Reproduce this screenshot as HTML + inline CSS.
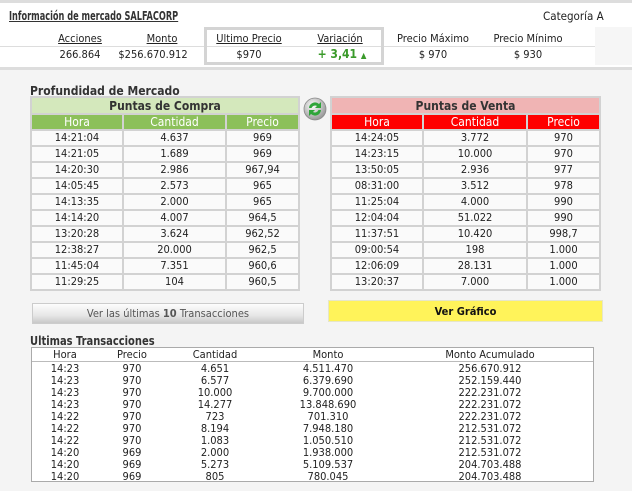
<!DOCTYPE html>
<html><head><meta charset="utf-8"><style>
*{margin:0;padding:0;box-sizing:border-box}
body{width:632px;height:491px;overflow:hidden;background:#f4f4f4;font-family:"DejaVu Sans Condensed","Liberation Sans",sans-serif;font-size:11px;color:#222;position:relative}
.a{position:absolute}
.top{left:0;top:0;width:632px;height:70px;background:#fff;border-top:3px solid #ddd;border-bottom:3px solid #ddd}
.st{position:absolute;text-align:center;width:100px}
u{text-decoration:underline}
table.t{position:absolute;border-collapse:separate;border-spacing:2px;background:#d2d2d2;table-layout:fixed}
table.t td{background:#fafafa;text-align:center;height:14px;line-height:14px;padding:0;font-size:11px}
table.t td.ti{font-weight:bold;height:15px;font-size:12px;color:#333}
table.t td.h{color:#fff;font-size:12px}
.tr{position:absolute;left:31px;top:347px;width:563px;height:135px;background:#fff;border:1px solid #aaa}
.row{position:absolute;left:0;width:561px;height:12px;line-height:12px}
.row span{position:absolute;text-align:center;width:120px}
</style></head><body>
<div class="a top"></div>
<div class="a" style="left:9px;top:9px;font-weight:bold;font-size:12px;color:#333;transform:scaleX(0.76);transform-origin:0 0;white-space:nowrap"><u>Información de mercado SALFACORP</u></div>
<div class="a" style="left:543px;top:9px;font-size:11.5px">Categoría A</div>
<div class="a" style="left:0;top:46px;width:595px;height:1px;background:#ddd"></div>
<div class="a" style="left:595px;top:27px;width:37px;height:38px;background:#f6f6f6"></div>
<div class="a" style="left:204px;top:27px;width:180px;height:38px;border:3px solid #d4d4d4"></div>
<div class="st" style="left:30px;top:32px"><u>Acciones</u></div>
<div class="st" style="left:30px;top:48px">266.864</div>
<div class="st" style="left:112px;top:32px"><u>Monto</u></div>
<div class="st" style="left:103px;top:48px">$256.670.912</div>
<div class="st" style="left:199px;top:32px"><u>Ultimo Precio</u></div>
<div class="st" style="left:199px;top:48px">$970</div>
<div class="st" style="left:290px;top:32px"><u>Variación</u></div>
<div class="st" style="left:292px;top:47px;color:#3a9a2a;font-weight:bold;font-size:12px">+ 3,41 <span style="font-size:8px">▲</span></div>
<div class="st" style="left:383px;top:32px">Precio Máximo</div>
<div class="st" style="left:383px;top:48px">$ 970</div>
<div class="st" style="left:478px;top:32px">Precio Mínimo</div>
<div class="st" style="left:478px;top:48px">$ 930</div>

<div class="a" style="left:30px;top:84px;font-weight:bold;font-size:12px;color:#333">Profundidad de Mercado</div>

<table class="t" style="left:30px;top:96px;width:270px">
<colgroup><col style="width:90px"><col style="width:101px"><col></colgroup>
<tr><td class="ti" colspan="3" style="background:#d4e8bc">Puntas de Compra</td></tr>
<tr><td class="h" style="background:#8cc05a">Hora</td><td class="h" style="background:#8cc05a">Cantidad</td><td class="h" style="background:#8cc05a">Precio</td></tr>
<tr><td>14:21:04</td><td>4.637</td><td>969</td></tr>
<tr><td>14:21:05</td><td>1.689</td><td>969</td></tr>
<tr><td>14:20:30</td><td>2.986</td><td>967,94</td></tr>
<tr><td>14:05:45</td><td>2.573</td><td>965</td></tr>
<tr><td>14:13:35</td><td>2.000</td><td>965</td></tr>
<tr><td>14:14:20</td><td>4.007</td><td>964,5</td></tr>
<tr><td>13:20:28</td><td>3.624</td><td>962,52</td></tr>
<tr><td>12:38:27</td><td>20.000</td><td>962,5</td></tr>
<tr><td>11:45:04</td><td>7.351</td><td>960,6</td></tr>
<tr><td>11:29:25</td><td>104</td><td>960,5</td></tr>
</table>

<svg class="a" style="left:303px;top:97px" width="24" height="24" viewBox="0 0 24 24">
<defs><radialGradient id="g" cx="40%" cy="35%" r="65%"><stop offset="0" stop-color="#fff"/><stop offset="1" stop-color="#999"/></radialGradient></defs>
<circle cx="12" cy="12" r="11" fill="url(#g)" stroke="#888" stroke-width="0.8"/>
<path d="M6 11 A6 6 0 0 1 16 7 L18 5 L18 11 L12 11 L14 9 A4 4 0 0 0 8.5 11Z" fill="#2fa53a"/>
<path d="M18 13 A6 6 0 0 1 8 17 L6 19 L6 13 L12 13 L10 15 A4 4 0 0 0 15.5 13Z" fill="#2fa53a"/>
</svg>

<table class="t" style="left:330px;top:96px;width:271px">
<colgroup><col style="width:90px"><col style="width:102px"><col></colgroup>
<tr><td class="ti" colspan="3" style="background:#f0b4b4">Puntas de Venta</td></tr>
<tr><td class="h" style="background:#ff0000">Hora</td><td class="h" style="background:#ff0000">Cantidad</td><td class="h" style="background:#ff0000">Precio</td></tr>
<tr><td>14:24:05</td><td>3.772</td><td>970</td></tr>
<tr><td>14:23:15</td><td>10.000</td><td>970</td></tr>
<tr><td>13:50:05</td><td>2.936</td><td>977</td></tr>
<tr><td>08:31:00</td><td>3.512</td><td>978</td></tr>
<tr><td>11:25:04</td><td>4.000</td><td>990</td></tr>
<tr><td>12:04:04</td><td>51.022</td><td>990</td></tr>
<tr><td>11:37:51</td><td>10.420</td><td>998,7</td></tr>
<tr><td>09:00:54</td><td>198</td><td>1.000</td></tr>
<tr><td>12:06:09</td><td>28.131</td><td>1.000</td></tr>
<tr><td>13:20:37</td><td>7.000</td><td>1.000</td></tr>
</table>

<div class="a" style="left:32px;top:303px;width:272px;height:21px;border:1px solid #ccc;background:linear-gradient(#fdfdfd,#e6e6e6 60%,#c8c8c8);text-align:center;line-height:20px;color:#555">Ver las últimas <b>10</b> Transacciones</div>
<div class="a" style="left:328px;top:300px;width:275px;height:22px;border:1px solid #e6e6c8;background:#fff35a;text-align:center;line-height:21px;font-weight:bold;color:#111">Ver Gráfico</div>

<div class="a" style="left:30px;top:334px;font-weight:bold;font-size:12px;color:#333;transform:scaleX(0.92);transform-origin:0 0;white-space:nowrap">Ultimas Transacciones</div>
<div class="tr">
<div class="a" style="left:0;top:13px;width:561px;height:1px;background:#bbb"></div>
<div class="row" style="top:1px"><span style="left:-27px">Hora</span><span style="left:40px">Precio</span><span style="left:123px">Cantidad</span><span style="left:236px">Monto</span><span style="left:398px">Monto Acumulado</span></div>
<div class="row" style="top:15px"><span style="left:-27px">14:23</span><span style="left:40px">970</span><span style="left:123px">4.651</span><span style="left:236px">4.511.470</span><span style="left:398px">256.670.912</span></div>
<div class="row" style="top:27px"><span style="left:-27px">14:23</span><span style="left:40px">970</span><span style="left:123px">6.577</span><span style="left:236px">6.379.690</span><span style="left:398px">252.159.440</span></div>
<div class="row" style="top:39px"><span style="left:-27px">14:23</span><span style="left:40px">970</span><span style="left:123px">10.000</span><span style="left:236px">9.700.000</span><span style="left:398px">222.231.072</span></div>
<div class="row" style="top:51px"><span style="left:-27px">14:23</span><span style="left:40px">970</span><span style="left:123px">14.277</span><span style="left:236px">13.848.690</span><span style="left:398px">222.231.072</span></div>
<div class="row" style="top:63px"><span style="left:-27px">14:22</span><span style="left:40px">970</span><span style="left:123px">723</span><span style="left:236px">701.310</span><span style="left:398px">222.231.072</span></div>
<div class="row" style="top:75px"><span style="left:-27px">14:22</span><span style="left:40px">970</span><span style="left:123px">8.194</span><span style="left:236px">7.948.180</span><span style="left:398px">212.531.072</span></div>
<div class="row" style="top:87px"><span style="left:-27px">14:22</span><span style="left:40px">970</span><span style="left:123px">1.083</span><span style="left:236px">1.050.510</span><span style="left:398px">212.531.072</span></div>
<div class="row" style="top:99px"><span style="left:-27px">14:20</span><span style="left:40px">969</span><span style="left:123px">2.000</span><span style="left:236px">1.938.000</span><span style="left:398px">212.531.072</span></div>
<div class="row" style="top:111px"><span style="left:-27px">14:20</span><span style="left:40px">969</span><span style="left:123px">5.273</span><span style="left:236px">5.109.537</span><span style="left:398px">204.703.488</span></div>
<div class="row" style="top:123px"><span style="left:-27px">14:20</span><span style="left:40px">969</span><span style="left:123px">805</span><span style="left:236px">780.045</span><span style="left:398px">204.703.488</span></div>
</div>
</body></html>
